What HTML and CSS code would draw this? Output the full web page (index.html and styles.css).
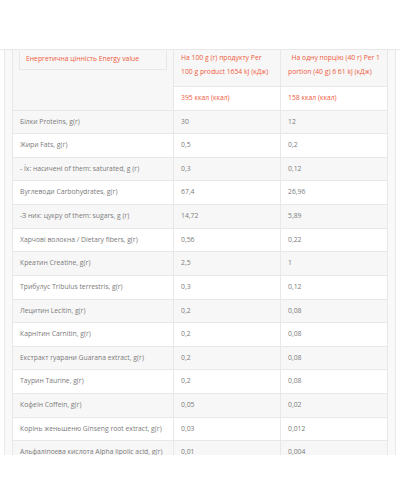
FILE: index.html
```html
<!DOCTYPE html>
<html lang="uk">

<head>
    <meta charset="utf-8">
    <title>Nutrition Facts</title>
    <link rel="stylesheet" href="styles.css">
</head>

<body>
    <div class="frame">
        <div class="outer">
            <table class="nutrition">
                <colgroup>
                    <col class="col-name">
                    <col class="col-100">
                    <col class="col-portion">
                </colgroup>
                <tr class="head">
                    <td rowspan="2" class="label-cell">
                        <div class="label-box">Енергетична цінність Energy value</div>
                    </td>
                    <td>На 100 g (г) продукту Per 100 g product 1654 kJ (кДж)</td>
                    <td>&nbsp; На одну порцію (40 г) Per 1 portion (40 g) 6 61 kJ (кДж)</td>
                </tr>
                <tr class="head">
                    <td>395 ккал (ккал)</td>
                    <td>158 ккал (ккал)</td>
                </tr>
                <tr><td>Білки Proteins, g(г)</td><td>30</td><td>12</td></tr>
                <tr><td>Жири Fats, g(г)</td><td>0,5</td><td>0,2</td></tr>
                <tr><td>- Їх: насичені of them: saturated, g (г)</td><td>0,3</td><td>0,12</td></tr>
                <tr><td>Вуглеводи Carbohydrates, g(г)</td><td>67,4</td><td>26,96</td></tr>
                <tr><td>-З них: цукру of them: sugars, g (г)</td><td>14,72</td><td>5,89</td></tr>
                <tr><td>Харчові волокна / Dietary fibers, g(г)</td><td>0,56</td><td>0,22</td></tr>
                <tr><td>Креатин Creatine, g(г)</td><td>2,5</td><td>1</td></tr>
                <tr><td>Трибулус Tribulus terrestris, g(г)</td><td>0,3</td><td>0,12</td></tr>
                <tr><td>Лецитин Lecitin, g(г)</td><td>0,2</td><td>0,08</td></tr>
                <tr><td>Карнітин Carnitin, g(г)</td><td>0,2</td><td>0,08</td></tr>
                <tr><td>Екстракт гуарани Guarana extract, g(г)</td><td>0,2</td><td>0,08</td></tr>
                <tr><td>Таурин Taurine, g(г)</td><td>0,2</td><td>0,08</td></tr>
                <tr><td>Кофеїн Coffeіn, g(г)</td><td>0,05</td><td>0,02</td></tr>
                <tr><td>Корінь женьшеню Ginseng root extract, g(г)</td><td>0,03</td><td>0,012</td></tr>
                <tr><td>Альфаліпоєва кислота Alpha lipolic acid, g(г)</td><td>0,01</td><td>0,004</td></tr>
            </table>
        </div>
    </div>
</body>

</html>
```

FILE: styles.css
```css
* {
    margin: 0;
    padding: 0;
    box-sizing: border-box;
}

body {
    background: #ffffff;
    font-family: "Open Sans", sans-serif;
}

.frame {
    margin-top: 49px;
    height: 406px;
    overflow: hidden;
    border-top: 1px solid #e8e8e8;
}

.outer {
    width: 392px;
    height: 100%;
    margin-left: 4px;
    padding: 0 7px;
    background: #f9f9f9;
    border-left: 1px solid #e8e8e8;
    border-right: 1px solid #e8e8e8;
}

.nutrition {
    width: 376px;
    border-collapse: collapse;
    table-layout: fixed;
    font-size: 6.8px;
    line-height: 14.44px;
    color: #7b7b7b;
}

.col-name {
    width: 161px;
}

.col-100,
.col-portion {
    width: 107px;
}

.nutrition td {
    padding: 4.1px 7px;
    border: 1px solid #e8e8e8;
    vertical-align: top;
    background: #ffffff;
}

.nutrition tr:first-child td {
    border-top: 0;
    padding-top: 1px;
    padding-bottom: 6px;
}

.nutrition tr:nth-child(odd) td,
.nutrition .label-cell {
    background: #f7f7f7;
}

.head td {
    color: #f05a3b;
}

.nutrition .label-cell {
    padding: 0 6px;
}

.label-box {
    padding: 1px 6px 3px;
    border: 1px solid #e8e8e8;
    border-top: 0;
}
```
